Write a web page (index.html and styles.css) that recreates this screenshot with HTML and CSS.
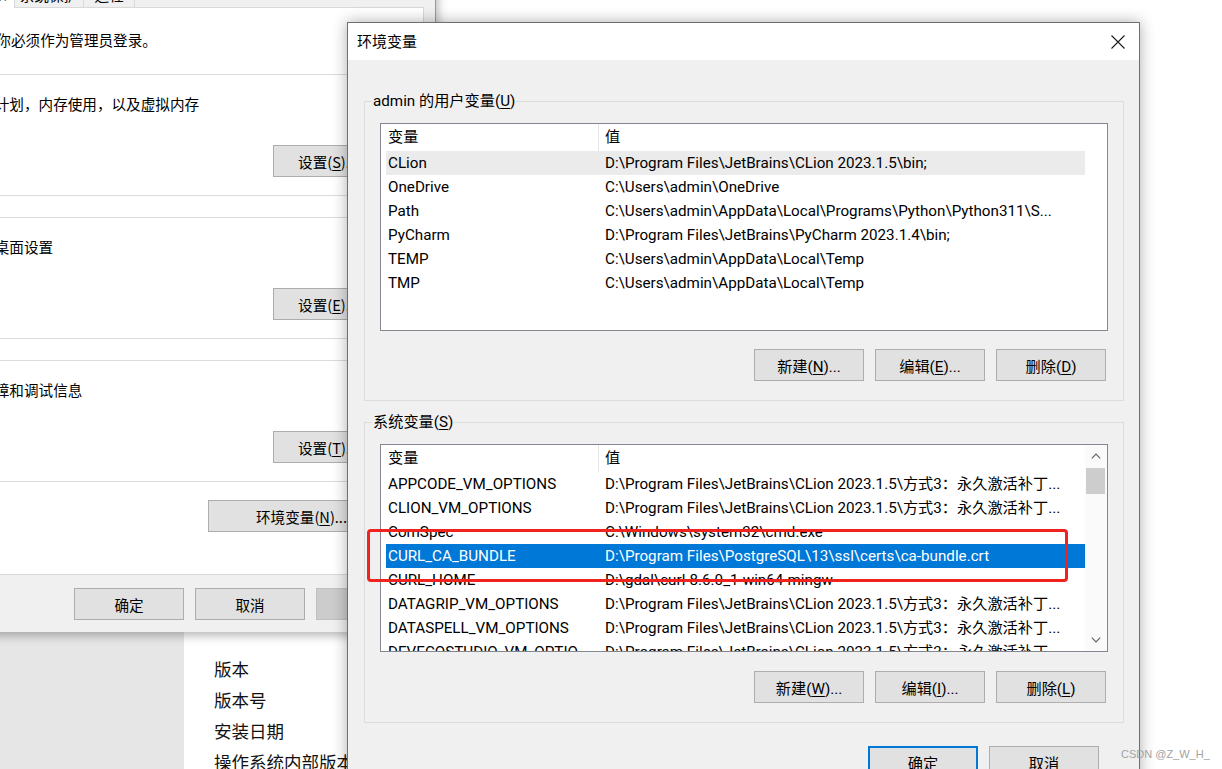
FILE: index.html
```html
<!DOCTYPE html>
<html lang="zh-CN">
<head>
<meta charset="utf-8">
<title>环境变量</title>
<link rel="stylesheet" href="styles.css">
</head>
<body>
<div class="desktop">

  <section class="settings">
    <nav class="settings-nav"></nav>
    <div class="settings-main">
      <ul class="spec-list">
        <li>版本</li>
        <li>版本号</li>
        <li>安装日期</li>
        <li>操作系统内部版本</li>
      </ul>
    </div>
  </section>

  <section class="sysprops">
    <div class="tabs">
      <span class="tab tab-w70">计算机名</span>
      <span class="tab tab-w45">硬件</span>
      <span class="tab tab-w46 tab-active">高级</span>
      <span class="tab tab-w70">系统保护</span>
      <span class="tab tab-w52">远程</span>
    </div>
    <div class="panel">
      <p class="admin-note">要进行大多数更改，你必须作为管理员登录。</p>
      <div class="sgroup">
        <span class="sgroup-legend">性能</span>
        <p class="sgroup-text">视觉效果，处理器计划，内存使用，以及虚拟内存</p>
        <div class="sgroup-actions"><button class="wbtn wbtn-set">设置(<u>S</u>)...</button></div>
      </div>
      <div class="sgroup">
        <span class="sgroup-legend">用户配置文件</span>
        <p class="sgroup-text">与登录帐户相关的桌面设置</p>
        <div class="sgroup-actions"><button class="wbtn wbtn-set">设置(<u>E</u>)...</button></div>
      </div>
      <div class="sgroup">
        <span class="sgroup-legend">启动和故障恢复</span>
        <p class="sgroup-text">系统启动、系统故障和调试信息</p>
        <div class="sgroup-actions"><button class="wbtn wbtn-set">设置(<u>T</u>)...</button></div>
      </div>
      <div class="env-row"><button class="wbtn wbtn-env">环境变量(<u>N</u>)...</button></div>
    </div>
    <div class="sp-footer">
      <button class="wbtn wbtn-foot">确定</button>
      <button class="wbtn wbtn-foot">取消</button>
      <button class="wbtn wbtn-foot wbtn-disabled">应用(<u>A</u>)</button>
    </div>
  </section>

  <section class="envdlg">
    <header class="dlg-title">
      <span class="dlg-title-text">环境变量</span>
      <span class="dlg-close">
        <svg width="14" height="14" viewBox="0 0 14 14"><path d="M0.5 0.5L13.5 13.5M13.5 0.5L0.5 13.5" stroke="#1a1a1a" stroke-width="1.1" fill="none"/></svg>
      </span>
    </header>
    <div class="dlg-body">
      <div class="vgroup">
        <span class="vgroup-legend">admin 的用户变量(<u>U</u>)</span>
        <div class="lv">
          <div class="lv-main">
            <div class="lv-head"><span class="lv-h1">变量</span><span class="lv-h2">值</span></div>
            <div class="lv-row is-hover"><span class="lv-c1">CLion</span><span class="lv-c2">D:\Program Files\JetBrains\CLion 2023.1.5\bin;</span></div>
            <div class="lv-row"><span class="lv-c1">OneDrive</span><span class="lv-c2">C:\Users\admin\OneDrive</span></div>
            <div class="lv-row"><span class="lv-c1">Path</span><span class="lv-c2">C:\Users\admin\AppData\Local\Programs\Python\Python311\S...</span></div>
            <div class="lv-row"><span class="lv-c1">PyCharm</span><span class="lv-c2">D:\Program Files\JetBrains\PyCharm 2023.1.4\bin;</span></div>
            <div class="lv-row"><span class="lv-c1">TEMP</span><span class="lv-c2">C:\Users\admin\AppData\Local\Temp</span></div>
            <div class="lv-row"><span class="lv-c1">TMP</span><span class="lv-c2">C:\Users\admin\AppData\Local\Temp</span></div>
          </div>
        </div>
        <div class="lv-actions">
          <button class="wbtn wbtn-act">新建(<u>N</u>)...</button>
          <button class="wbtn wbtn-act">编辑(<u>E</u>)...</button>
          <button class="wbtn wbtn-act">删除(<u>D</u>)</button>
        </div>
      </div>

      <div class="vgroup vgroup-sys">
        <span class="vgroup-legend">系统变量(<u>S</u>)</span>
        <div class="lv">
          <div class="lv-main">
            <div class="lv-head"><span class="lv-h1">变量</span><span class="lv-h2">值</span></div>
            <div class="lv-row"><span class="lv-c1">APPCODE_VM_OPTIONS</span><span class="lv-c2">D:\Program Files\JetBrains\CLion 2023.1.5\方式3：永久激活补丁...</span></div>
            <div class="lv-row"><span class="lv-c1">CLION_VM_OPTIONS</span><span class="lv-c2">D:\Program Files\JetBrains\CLion 2023.1.5\方式3：永久激活补丁...</span></div>
            <div class="lv-row"><span class="lv-c1">ComSpec</span><span class="lv-c2">C:\Windows\system32\cmd.exe</span></div>
            <div class="lv-row is-selected"><span class="lv-c1">CURL_CA_BUNDLE</span><span class="lv-c2">D:\Program Files\PostgreSQL\13\ssl\certs\ca-bundle.crt</span></div>
            <div class="lv-row"><span class="lv-c1">CURL_HOME</span><span class="lv-c2">D:\gdal\curl-8.6.0_1-win64-mingw</span></div>
            <div class="lv-row"><span class="lv-c1">DATAGRIP_VM_OPTIONS</span><span class="lv-c2">D:\Program Files\JetBrains\CLion 2023.1.5\方式3：永久激活补丁...</span></div>
            <div class="lv-row"><span class="lv-c1">DATASPELL_VM_OPTIONS</span><span class="lv-c2">D:\Program Files\JetBrains\CLion 2023.1.5\方式3：永久激活补丁...</span></div>
            <div class="lv-row"><span class="lv-c1">DEVECOSTUDIO_VM_OPTIONS</span><span class="lv-c2">D:\Program Files\JetBrains\CLion 2023.1.5\方式3：永久激活补丁...</span></div>
          </div>
          <div class="vscroll">
            <span class="vs-btn"><svg width="10" height="6" viewBox="0 0 10 6"><path d="M0.8 5.4L5 1.2L9.2 5.4" stroke="#606060" stroke-width="1.2" fill="none"/></svg></span>
            <span class="vs-track"><span class="vs-thumb"></span></span>
            <span class="vs-btn"><svg width="10" height="6" viewBox="0 0 10 6"><path d="M0.8 0.6L5 4.8L9.2 0.6" stroke="#606060" stroke-width="1.2" fill="none"/></svg></span>
          </div>
        </div>
        <div class="lv-actions lv-actions-sys">
          <button class="wbtn wbtn-act">新建(<u>W</u>)...</button>
          <button class="wbtn wbtn-act">编辑(<u>I</u>)...</button>
          <button class="wbtn wbtn-act">删除(<u>L</u>)</button>
        </div>
      </div>

      <div class="dlg-actions">
        <button class="wbtn wbtn-act wbtn-default">确定</button>
        <button class="wbtn wbtn-act">取消</button>
      </div>
    </div>
  </section>

  <div class="annot"></div>
  <div class="watermark">CSDN @Z_W_H_</div>
</div>
</body>
</html>
```

FILE: styles.css
```css
* { box-sizing: border-box; }
html, body { margin: 0; padding: 0; }
body {
  width: 1222px;
  height: 769px;
  overflow: hidden;
  background: #fff;
  color: #000;
  font-family: Roboto, "Noto Sans CJK SC", sans-serif;
}
u { text-decoration: underline; text-underline-offset: 2px; }

.desktop { position: relative; width: 1222px; height: 769px; overflow: hidden; }

/* Settings app (behind) */
.settings { position: absolute; left: 0; top: 0; width: 1222px; height: 769px; display: flex; }
.settings-nav { width: 184px; background: #e6e6e6; }
.settings-main { flex: 1; background: #fff; padding: 653px 0 0 30px; }
.spec-list {
  list-style: none; margin: 0; padding: 0;
  font-family: "Noto Sans CJK SC", sans-serif;
  font-size: 17.5px; line-height: 31px; color: #111;
}

/* System properties window */
.sysprops {
  position: absolute; left: -160px; top: -27px;
  width: 596px; height: 659px;
  display: flex; flex-direction: column;
  background: #f0f0f0;
  border-right: 1px solid #9a9a9a;
  box-shadow: 2px 4px 9px rgba(0, 0, 0, 0.28);
  padding: 0 11px 0 10px;
  font-family: "Noto Sans CJK SC", sans-serif;
  font-size: 14.6px;
}
.tabs { height: 34px; flex: none; display: flex; align-items: flex-end; padding-left: 7px; }
.tab {
  height: 24px; line-height: 22px; text-align: center;
  border: 1px solid #d9d9d9; border-bottom: none;
  background: #f0f0f0; margin-left: -1px; white-space: nowrap;
}
.tab-w70 { width: 70px; }
.tab-w45 { width: 45px; }
.tab-w46 { width: 46px; }
.tab-w52 { width: 52px; }
.tab-active { background: #fff; height: 27px; margin-bottom: -1px; position: relative; z-index: 1; }

.panel {
  flex: 1; background: #fff; border: 1px solid #d9d9d9;
  padding: 22px 13px 0 9px;
}
.admin-note { margin: 0 0 0 5px; line-height: 20px; white-space: nowrap; }
.sgroup { border: 1px solid #dcdcdc; margin-top: 21px; padding: 0 14px 18px 17px; }
.admin-note + .sgroup { margin-top: 24px; }
.sgroup-legend {
  display: block; width: max-content;
  margin: -11px 0 0 -9px; padding: 0 2px;
  background: #fff; line-height: 20px;
}
.sgroup-text { margin: 10px 0 0; line-height: 20px; white-space: nowrap; }
.sgroup-actions { display: flex; justify-content: flex-end; margin-top: 31px; padding-right: 12px; }
.env-row { display: flex; justify-content: flex-end; margin-top: 18px; padding-right: 15px; }

.wbtn {
  font: inherit; color: #000;
  height: 32px; padding: 0;
  border: 1px solid #adadad; background: #e1e1e1;
  white-space: nowrap;
}
.wbtn-set { width: 110px; }
.wbtn-env { width: 187px; }
.wbtn-foot { width: 110px; }
.wbtn-disabled { background: #cccccc; border-color: #bfbfbf; color: #838383; }
.sp-footer {
  height: 57px; flex: none;
  display: flex; justify-content: flex-end; gap: 11px;
  padding-top: 13px; margin-right: -2px;
}

/* Environment variables dialog */
.envdlg {
  position: absolute; left: 347px; top: 22px;
  width: 793px; height: 780px;
  background: #f0f0f0;
  border: 1px solid #6f6f6f;
  box-shadow: 0 0 14px rgba(0, 0, 0, 0.32);
  font-size: 15.2px;
}
.dlg-title {
  height: 37px; background: #fff;
  display: flex; align-items: center; justify-content: space-between;
  padding-left: 9px;
}
.dlg-title-text { font-family: "Noto Sans CJK SC", sans-serif; font-size: 15px; line-height: 20px; margin-top: -2px; }
.dlg-close { width: 42px; height: 37px; display: flex; align-items: center; justify-content: center; }

.dlg-body { padding: 41px 15px 0 16px; }
.vgroup { border: 1px solid #dcdcdc; padding: 0 15px 19px 15px; }
.vgroup-sys { margin-top: 21px; }
.vgroup-legend {
  display: block; width: max-content;
  margin: -11px 0 0 -8px; padding: 0 1px;
  background: #f0f0f0; line-height: 20px;
}

.lv {
  margin-top: 12px; height: 208px;
  border: 1px solid #828790; background: #fff;
  display: flex; overflow: hidden;
}
.lv-main { width: 704px; flex: none; overflow: hidden; }
.lv-head { display: flex; height: 27px; line-height: 27px; }
.lv-h1 { width: 217px; padding-left: 7px; }
.lv-h2 { width: 487px; padding-left: 6px; border-left: 1px solid #e5e5e5; }
.lv-row {
  display: flex; width: 699px; height: 24px; line-height: 24px;
  margin-left: 5px; white-space: nowrap;
}
.lv-c1 { width: 212px; flex: none; padding: 0 8px 0 2px; overflow: hidden; text-overflow: ellipsis; }
.lv-c2 { flex: 1; padding-left: 7px; overflow: hidden; }
.lv-row.is-hover { background: #ebebeb; }
.lv-row.is-selected { background: #0078d7; color: #fff; }

.vscroll { width: 22px; flex: none; display: flex; flex-direction: column; background: #fafafa; }
.vs-btn { height: 22px; flex: none; display: flex; align-items: center; justify-content: center; }
.vs-track { flex: 1; padding: 1px 2px 0 1px; }
.vs-thumb { display: block; height: 26px; background: #cdcdcd; }

.lv-actions { display: flex; justify-content: flex-end; gap: 11px; margin-top: 18px; padding-right: 2px; }
.lv-actions-sys { margin-top: 19px; }
.wbtn-act { width: 110px; }
.wbtn-default { border-color: #0078d7; box-shadow: inset 0 0 0 1px #0078d7; }
.dlg-actions { display: flex; justify-content: flex-end; gap: 11px; margin-top: 23px; padding-right: 25px; }

/* Annotation + watermark overlays */
.annot {
  position: absolute; left: 367px; top: 529px;
  width: 701px; height: 53px;
  border: 3px solid #f0231f; border-radius: 4px;
}
.watermark {
  position: absolute; left: 1121px; top: 747px;
  font-family: "Liberation Sans", Arial, sans-serif;
  font-size: 11px; line-height: 15px; color: #a3a3a3;
}
```
